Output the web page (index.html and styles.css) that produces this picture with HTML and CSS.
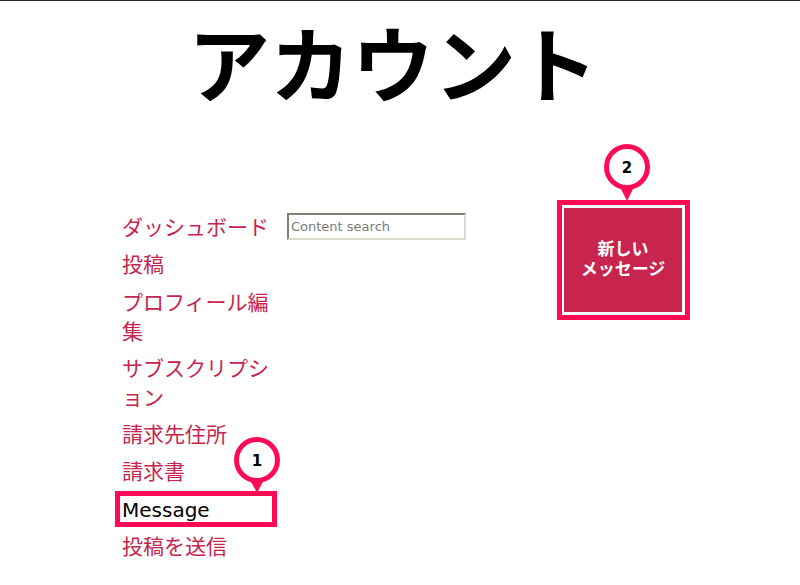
FILE: index.html
```html
<!DOCTYPE html>
<html lang="ja">
<head>
<meta charset="utf-8">
<title>アカウント</title>
<link rel="stylesheet" href="styles.css">
</head>
<body>
<div class="page">
  <h1 class="title">アカウント</h1>
  <div class="layout">
    <nav class="menu">
      <a class="menu-item" href="#">ダッシュボード</a>
      <a class="menu-item" href="#">投稿</a>
      <a class="menu-item" href="#">プロフィール編集</a>
      <a class="menu-item" href="#">サブスクリプション</a>
      <a class="menu-item" href="#">請求先住所</a>
      <a class="menu-item" href="#">請求書</a>
      <a class="menu-item active" href="#">Message</a>
      <a class="menu-item" href="#">投稿を送信</a>
    </nav>
    <input class="search" type="text" placeholder="Content search">
    <button class="new-msg">新しい<br>メッセージ</button>
  </div>
  <svg class="annotations" width="800" height="585" viewBox="0 0 800 585">
    <rect x="117.5" y="493.5" width="157" height="31" fill="none" stroke="#ff0a54" stroke-width="5"/>
    <rect x="559.5" y="202.5" width="128" height="115" fill="none" stroke="#ff0a54" stroke-width="5"/>
    <path d="M248 476 L266 476 L257 493 Z" fill="#ff0a54"/>
    <circle cx="257" cy="460" r="20.5" fill="#fff" stroke="#ff0a54" stroke-width="5"/>
    <text class="badge-num" x="257" y="465.5" text-anchor="middle">1</text>
    <path d="M618 183 L636 183 L627 201 Z" fill="#ff0a54"/>
    <circle cx="627" cy="167" r="20.5" fill="#fff" stroke="#ff0a54" stroke-width="5"/>
    <text class="badge-num" x="627" y="172.5" text-anchor="middle">2</text>
  </svg>
</div>
</body>
</html>
```
FILE: styles.css
```css
html, body {
  margin: 0;
  padding: 0;
  background: #fff;
}
body {
  border-top: 1px solid #1f2a2e;
  font-family: "DejaVu Sans", "Noto Sans CJK JP", sans-serif;
}
.page {
  position: relative;
  width: 800px;
  height: 584px;
  overflow: hidden;
}
.title {
  margin: 2px 0 0;
  text-align: center;
  font-family: "Noto Sans CJK JP", sans-serif;
  font-weight: 700;
  font-size: 82px;
  line-height: 116px;
  color: #000;
  padding-right: 14px;
}
.layout {
  display: flex;
  align-items: flex-start;
  padding-left: 122px;
  margin-top: 89px;
}
.menu {
  width: 150px;
  display: flex;
  flex-direction: column;
  gap: 8.3px;
  padding-top: 6px;
}
.menu-item {
  font-size: 21px;
  line-height: 29px;
  color: #c7254e;
  text-decoration: none;
  word-break: break-all;
}
.menu-item.active {
  color: #000;
  font-size: 20px;
}
.search {
  box-sizing: border-box;
  width: 179px;
  height: 27px;
  margin: 5px 0 0 15px;
  padding: 0 2px;
  border-style: solid;
  border-width: 2px;
  border-color: #847f73 #ddd9cd #ddd9cd #847f73;
  font-family: "DejaVu Sans", sans-serif;
  font-size: 13px;
  background: #fff;
}
.search::placeholder {
  color: #7a7a7a;
}
.new-msg {
  box-sizing: border-box;
  width: 118px;
  height: 104px;
  margin-left: 98px;
  border: none;
  background: #c7254e;
  color: #fff;
  font-family: "Noto Sans CJK JP", sans-serif;
  font-weight: 700;
  font-size: 17px;
  line-height: 20px;
  padding: 0 0 4px;
}
.annotations {
  position: absolute;
  left: 0;
  top: -1px;
  pointer-events: none;
}
.badge-num {
  font-family: "DejaVu Sans", sans-serif;
  font-weight: 700;
  font-size: 15px;
  fill: #000;
}
```
